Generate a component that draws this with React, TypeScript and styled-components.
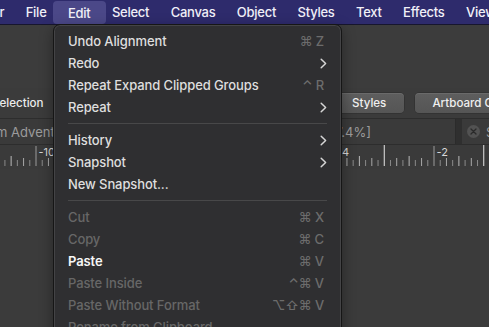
import React from "react";
import styled, { createGlobalStyle } from "styled-components";

const Global = createGlobalStyle`
  html, body { margin: 0; padding: 0; background: #3b3b3b; overflow: hidden; }
  body { font-family: "Inter", "DejaVu Sans", sans-serif; -webkit-font-smoothing: antialiased; }
`;

const Page = styled.div`
  position: relative;
  width: 489px;
  height: 327px;
  overflow: hidden;
  display: flex;
  flex-direction: column;
  background: #3b3b3b;
`;

const MenuBar = styled.div`
  height: 24px;
  flex: 0 0 24px;
  display: flex;
  align-items: stretch;
  background: #2e2b6c;
  border-bottom: 1px solid #17162e;
  white-space: nowrap;
  overflow: hidden;
  margin-left: -77px;
`;

const BarItem = styled.div<{ $active?: boolean }>`
  display: flex;
  align-items: center;
  padding: 0 ${(p) => (p.$active ? "15px" : "10.7px")};
  margin: ${(p) => (p.$active ? "1px -4.3px 0" : "0")};
  border-radius: 4px;
  background: ${(p) => (p.$active ? "#4b4888" : "transparent")};
  color: #f1f0f8;
  font-size: 13px;
  font-weight: 500;
  letter-spacing: -0.25px;
`;

const Toolbar = styled.div`
  flex: 0 0 63px;
  background: #3c3c3c;
`;

const ControlRow = styled.div`
  flex: 0 0 31px;
  display: flex;
  align-items: center;
  background: #3b3b3b;
  border-bottom: 1px solid #2d2d2d;
  box-sizing: border-box;
`;

const LeftGroup = styled.div`
  flex: 0 0 335px;
  display: flex;
  align-items: center;
  gap: 12px;
  overflow: hidden;
`;

const RightGroup = styled.div`
  display: flex;
  gap: 11px;
  white-space: nowrap;
`;

const PlainButton = styled.div`
  color: #ececec;
  font-size: 11.6px;
  font-weight: 500;
  margin-left: -8px;
`;

const DarkButton = styled.div`
  width: 40px;
  height: 14px;
  background: #2a2a2a;
  border-radius: 2px;
`;

const ToolButton = styled.div`
  height: 20px;
  display: flex;
  align-items: center;
  padding: 0 18px 0 17px;
  border-radius: 4px;
  background: linear-gradient(#5e5e5e, #555555);
  box-shadow: inset 0 1px 0 rgba(255, 255, 255, 0.08), 0 0 0 0.5px #2c2c2c;
  color: #efefef;
  font-size: 11.6px;
  font-weight: 500;
`;

const FieldRow = styled.div`
  flex: 0 0 26px;
  display: flex;
  gap: 6px;
  background: #2f2f2f;
  border-bottom: 1px solid #2d2d2d;
  box-sizing: border-box;
  overflow: hidden;
`;

const Field = styled.div<{ $grow?: boolean }>`
  flex: ${(p) => (p.$grow ? "0 0 456px" : "1 0 auto")};
  display: flex;
  align-items: center;
  gap: 6px;
  background: #3a3a3a;
  border-right: 1px solid #2b2b2b;
  color: #9c9c9c;
  font-size: 13px;
  white-space: nowrap;
  overflow: hidden;
  padding: 0 0 0 ${(p) => (p.$grow ? "0" : "5px")};
  box-sizing: border-box;
`;

const LeadText = styled.span`
  margin-left: -33px;
`;

const TailText = styled.span`
  margin-left: auto;
  margin-right: 84px;
`;

const ClearIcon = styled.div`
  width: 13px;
  height: 13px;
  border-radius: 50%;
  background: #525252;
  display: flex;
  align-items: center;
  justify-content: center;
  flex: 0 0 auto;
`;

const RulerBox = styled.div`
  flex: 0 0 24px;
  background: #3a3a3a;
`;

const Canvas = styled.div`
  flex: 1;
  background: #3b3b3b;
`;

const Menu = styled.div`
  position: absolute;
  top: 24px;
  left: 53px;
  width: 289px;
  height: 330px;
  box-sizing: border-box;
  background: #2f2f31;
  border: 1px solid #161616;
  border-radius: 7px 7px 0 0;
  box-shadow: inset 0 0 0 1px rgba(255, 255, 255, 0.1), 0 4px 14px rgba(0, 0, 0, 0.35);
  padding: 5px 0 0;
  display: flex;
  flex-direction: column;
`;

const Row = styled.div<{ $tone: "normal" | "disabled" | "strong" }>`
  height: 22px;
  flex: 0 0 22px;
  display: flex;
  align-items: center;
  padding: 0 14px 0 14px;
  font-size: 13px;
  font-weight: ${(p) => (p.$tone === "strong" ? 600 : 500)};
  color: ${(p) =>
    p.$tone === "disabled" ? "#676767" : p.$tone === "strong" ? "#f7f7f7" : "#dedede"};
  letter-spacing: -0.1px;
`;

const Label = styled.span`
  flex: 1;
  white-space: nowrap;
`;

const Shortcut = styled.span`
  color: #6c6c6c;
  font-size: 13px;
  font-weight: 500;
  margin-right: 3px;
  font-family: "Inter", "DejaVu Sans", sans-serif;
  white-space: pre;
`;

const Separator = styled.div`
  flex: 0 0 11px;
  display: flex;
  align-items: center;
  padding: 0 14px;
  &::after {
    content: "";
    flex: 1;
    height: 1px;
    background: #484849;
  }
`;

type Item =
  | { sep: true }
  | { sep?: false; label: string; shortcut?: string; sub?: boolean; tone?: "normal" | "disabled" | "strong" };

const items: Item[] = [
  { label: "Undo Alignment", shortcut: "⌘ Z" },
  { label: "Redo", sub: true },
  { label: "Repeat Expand Clipped Groups", shortcut: "⌃ R" },
  { label: "Repeat", sub: true },
  { sep: true },
  { label: "History", sub: true },
  { label: "Snapshot", sub: true },
  { label: "New Snapshot..." },
  { sep: true },
  { label: "Cut", shortcut: "⌘ X", tone: "disabled" },
  { label: "Copy", shortcut: "⌘ C", tone: "disabled" },
  { label: "Paste", shortcut: "⌘ V", tone: "strong" },
  { label: "Paste Inside", shortcut: "⌃⌘ V", tone: "disabled" },
  { label: "Paste Without Format", shortcut: "⌥⇧⌘ V", tone: "disabled" },
  { label: "Rename from Clipboard", tone: "disabled" },
];

const Chevron = () => (
  <svg width="7" height="11" viewBox="0 0 7 11">
    <path d="M1.2 1.2 L5.6 5.5 L1.2 9.8" fill="none" stroke="#d6d6d6" strokeWidth="1.5" strokeLinecap="round" strokeLinejoin="round" />
  </svg>
);

const Ruler = () => {
  const unit = 49.75;
  const origin = 434; // x of -2
  const ticks: React.ReactNode[] = [];
  const labels: React.ReactNode[] = [];
  for (let i = -90; i < 120; i++) {
    const x = origin + (i * unit) / 8;
    if (x < -2 || x > 492) continue;
    const value = -2 + i / 8;
    let y1 = 13;
    let color = "#8d8d8d";
    if (i % 8 === 0) {
      const u = Math.round(value);
      if (u % 2 === 0) {
        y1 = 1;
        color = "#9a9a9a";
        labels.push(
          <text key={"l" + i} x={x + 2.5} y={11} fill="#d8d8d8" fontSize="11" fontFamily="Inter, DejaVu Sans, sans-serif">
            {u}
          </text>
        );
      } else {
        y1 = 0;
        color = "#e6e6e6";
      }
    } else if (i % 4 === 0) {
      y1 = 11;
      color = "#b9b9b9";
    } else if (i % 2 === 0) {
      y1 = 13;
      color = "#a8a8a8";
    } else {
      y1 = 15;
      color = "#8a8a8a";
    }
    ticks.push(<line key={i} x1={x} x2={x} y1={y1} y2={21} stroke={color} strokeWidth="1" />);
  }
  return (
    <svg width="489" height="24" style={{ display: "block" }}>
      {ticks}
      {labels}
    </svg>
  );
};

export default function App() {
  return (
    <>
      <Global />
      <Page>
        <MenuBar>
          <BarItem>Vectornator</BarItem>
          <BarItem>File</BarItem>
          <BarItem $active>Edit</BarItem>
          <BarItem>Select</BarItem>
          <BarItem>Canvas</BarItem>
          <BarItem>Object</BarItem>
          <BarItem>Styles</BarItem>
          <BarItem>Text</BarItem>
          <BarItem>Effects</BarItem>
          <BarItem>View</BarItem>
          <BarItem>Window</BarItem>
        </MenuBar>
        <Toolbar />
        <ControlRow>
          <LeftGroup>
            <PlainButton>Selection</PlainButton>
            <DarkButton />
          </LeftGroup>
          <RightGroup>
            <ToolButton>Styles</ToolButton>
            <ToolButton>Artboard Options</ToolButton>
          </RightGroup>
        </ControlRow>
        <FieldRow>
          <Field $grow>
            <LeadText>Dream Adventure</LeadText>
            <TailText>[67.4%]</TailText>
          </Field>
          <Field>
            <ClearIcon>
              <svg width="7" height="7" viewBox="0 0 7 7">
                <path d="M1 1 L6 6 M6 1 L1 6" stroke="#2a2a2a" strokeWidth="1.3" strokeLinecap="round" />
              </svg>
            </ClearIcon>
            <span>Search</span>
          </Field>
        </FieldRow>
        <RulerBox>
          <Ruler />
        </RulerBox>
        <Canvas />
        <Menu>
          {items.map((it, idx) =>
            it.sep ? (
              <Separator key={idx} />
            ) : (
              <Row key={idx} $tone={it.tone ?? "normal"}>
                <Label>{it.label}</Label>
                {it.shortcut && <Shortcut>{it.shortcut}</Shortcut>}
                {it.sub && <Chevron />}
              </Row>
            )
          )}
        </Menu>
      </Page>
    </>
  );
}
